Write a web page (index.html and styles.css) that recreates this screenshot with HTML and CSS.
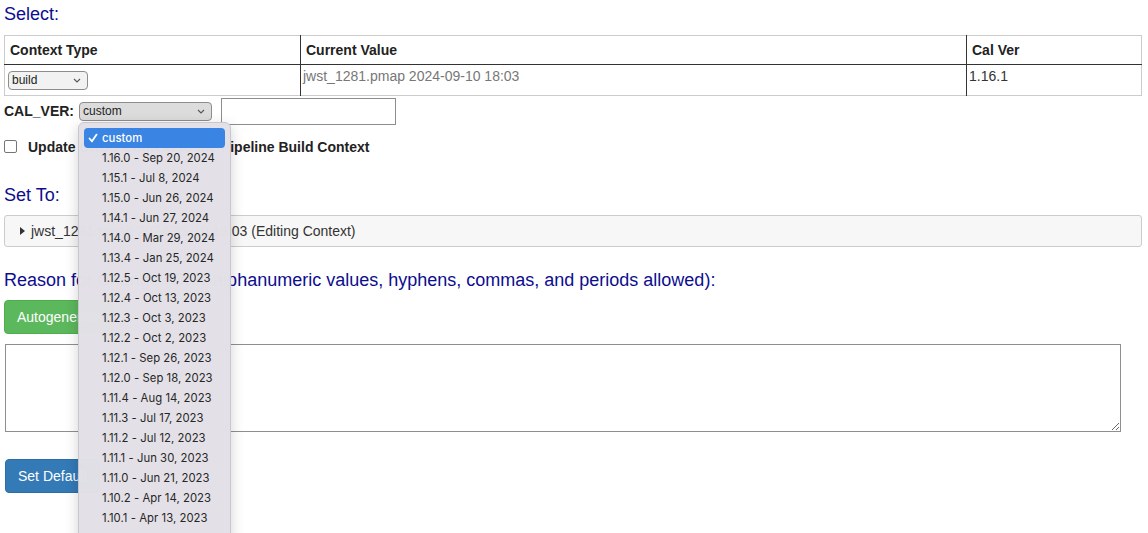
FILE: index.html
```html
<!DOCTYPE html>
<html lang="en">
<head>
<meta charset="utf-8">
<title>Context</title>
<link rel="stylesheet" href="styles.css">
</head>
<body>
<div class="page">
  <div class="heading">Select:</div>
  <table class="ctx-table">
    <thead>
      <tr><th class="c1">Context Type</th><th class="c2">Current Value</th><th class="c3">Cal Ver</th></tr>
    </thead>
    <tbody>
      <tr>
        <td class="c1 sel-cell">
          <span class="fake-select build-select">build
            <svg class="chev" width="8" height="5" viewBox="0 0 8 5"><path d="M1 1 L4 4 L7 1" fill="none" stroke="#555" stroke-width="1.1"/></svg>
          </span>
        </td>
        <td class="c2 val-cell">jwst_1281.pmap 2024-09-10 18:03</td>
        <td class="c3 ver-cell">1.16.1</td>
      </tr>
    </tbody>
  </table>

  <div class="calver-row">
    <span class="calver-label">CAL_VER:</span>
    <span class="select-wrap">
      <span class="fake-select calver-select">custom
        <svg class="chev" width="8" height="5" viewBox="0 0 8 5"><path d="M1 1 L4 4 L7 1" fill="none" stroke="#555" stroke-width="1.1"/></svg>
      </span>
      <div class="menu">
        <div class="menu-item active">
          <svg class="check" width="10" height="10" viewBox="0 0 10 10"><path d="M1.5 5.5 L4 8.3 L8.6 1.6" fill="none" stroke="#fff" stroke-width="1.8" stroke-linecap="round" stroke-linejoin="round"/></svg>custom</div>
        <div class="menu-item">1.16.0 - Sep 20, 2024</div>
        <div class="menu-item">1.15.1 - Jul 8, 2024</div>
        <div class="menu-item">1.15.0 - Jun 26, 2024</div>
        <div class="menu-item">1.14.1 - Jun 27, 2024</div>
        <div class="menu-item">1.14.0 - Mar 29, 2024</div>
        <div class="menu-item">1.13.4 - Jan 25, 2024</div>
        <div class="menu-item">1.12.5 - Oct 19, 2023</div>
        <div class="menu-item">1.12.4 - Oct 13, 2023</div>
        <div class="menu-item">1.12.3 - Oct 3, 2023</div>
        <div class="menu-item">1.12.2 - Oct 2, 2023</div>
        <div class="menu-item">1.12.1 - Sep 26, 2023</div>
        <div class="menu-item">1.12.0 - Sep 18, 2023</div>
        <div class="menu-item">1.11.4 - Aug 14, 2023</div>
        <div class="menu-item">1.11.3 - Jul 17, 2023</div>
        <div class="menu-item">1.11.2 - Jul 12, 2023</div>
        <div class="menu-item">1.11.1 - Jun 30, 2023</div>
        <div class="menu-item">1.11.0 - Jun 21, 2023</div>
        <div class="menu-item">1.10.2 - Apr 14, 2023</div>
        <div class="menu-item">1.10.1 - Apr 13, 2023</div>
      </div>
    </span>
    <input class="calver-input" type="text">
  </div>

  <label class="check-row">
    <span class="checkbox"></span>
    <span class="check-label">Update CRDS Context to the Pipeline Build Context</span>
  </label>

  <div class="heading set-to">Set To:</div>
  <div class="details-box">
    <span class="marker"></span>
    <span class="details-text">jwst_1281.pmap 2024-09-10 18:03 (Editing Context)</span>
  </div>

  <div class="heading reason">Reason for Change (Only alphanumeric values, hyphens, commas, and periods allowed):</div>
  <button class="btn btn-green">Autogenerate</button>
  <textarea class="reason-text"></textarea>
  <button class="btn btn-blue">Set Default</button>
</div>
</body>
</html>
```

FILE: styles.css
```css
html {
  overflow: hidden;
}
body {
  margin: 0;
  padding: 0;
  background: #fff;
  font-family: "Liberation Sans", Arial, sans-serif;
  font-size: 14px;
  color: #333;
}
.page {
  padding: 0 6px 0 4px;
  height: 533px;
  box-sizing: border-box;
  overflow: hidden;
}
.heading {
  font-size: 18px;
  line-height: 20px;
  color: #0d0d8f;
  padding-top: 4px;
  margin-bottom: 11px;
}
.ctx-table {
  width: 100%;
  border-collapse: collapse;
  border: 1px solid #ccc;
}
.ctx-table th {
  text-align: left;
  font-weight: bold;
  font-size: 14px;
  line-height: 19px;
  padding: 5px 5px 4px 5px;
  color: #222;
  border-bottom: 1px solid #333;
}
.ctx-table td {
  vertical-align: top;
  line-height: 20px;
  font-size: 14px;
}
.ctx-table .c1 { width: 285px; }
.ctx-table .c2 { width: 655px; border-left: 1px solid #333; }
.ctx-table .c3 { border-left: 1px solid #333; }
.sel-cell { padding: 4px 4px 5px 3px; height: 20px; }
.val-cell { padding: 1px 2px 8px 2px; color: #777; }
.ver-cell { padding: 1px 2px 8px 2px; color: #333; }

.fake-select {
  display: inline-flex;
  align-items: center;
  justify-content: space-between;
  box-sizing: border-box;
  border: 1px solid #8d8d8d;
  border-radius: 4px;
  font-family: "Liberation Sans", Arial, sans-serif;
  font-size: 12px;
  color: #222;
  padding: 0 6px 0 3px;
}
.chev { display: block; }
.build-select {
  width: 80px;
  height: 19px;
  background: #f2f2f2;
}
.calver-row {
  display: flex;
  align-items: center;
  height: 29px;
  margin-top: 1px;
}
.calver-label {
  font-weight: bold;
  color: #222;
  width: 75px;
}
.select-wrap {
  position: relative;
  margin-right: 9px;
}
.calver-select {
  width: 133px;
  height: 19px;
  background: #dcdcdc;
  margin-top: 0;
}
.calver-input {
  width: 175px;
  height: 27px;
  box-sizing: border-box;
  border: 1px solid #8d8d8d;
  border-radius: 0;
  margin: 0;
  padding: 0;
}
.menu {
  position: absolute;
  top: 20px;
  left: -1px;
  width: 153px;
  height: 430px;
  box-sizing: border-box;
  padding: 5px 5px;
  background: rgba(227, 225, 231, 0.99);
  border: 1px solid #c9c7cd;
  border-radius: 6px;
  box-shadow: 0 4px 14px rgba(0, 0, 0, 0.18);
  z-index: 10;
  overflow: hidden;
}
.menu-item {
  display: flex;
  align-items: center;
  height: 20px;
  padding-left: 18px;
  font-family: Inter, "Noto Sans", sans-serif;
  font-size: 11.3px;
  letter-spacing: 0.05px;
  color: #262626;
  white-space: nowrap;
  position: relative;
}
.menu-item.active {
  background: #3a84e3;
  color: #fff;
  border-radius: 4px;
  font-weight: 500;
}
.check {
  position: absolute;
  left: 4px;
  top: 5px;
}

.check-row {
  display: flex;
  align-items: center;
  margin-top: 12px;
  height: 18px;
}
.checkbox {
  width: 13px;
  height: 13px;
  box-sizing: border-box;
  border: 1px solid #767676;
  border-radius: 2px;
  background: #fff;
  margin-right: 11px;
}
.check-label {
  font-weight: bold;
  color: #222;
}
.set-to {
  margin-top: 25px;
  margin-bottom: 10px;
}
.details-box {
  display: flex;
  align-items: center;
  height: 32px;
  box-sizing: border-box;
  border: 1px solid #ccc;
  border-radius: 3px;
  background: #f7f7f7;
  padding-left: 15px;
}
.marker {
  width: 0;
  height: 0;
  border-top: 4px solid transparent;
  border-bottom: 4px solid transparent;
  border-left: 5px solid #333;
  margin-right: 6px;
}
.details-text { color: #333; }
.reason {
  margin-top: 19px;
  margin-bottom: 10px;
}
.btn {
  display: block;
  font-family: "Liberation Sans", Arial, sans-serif;
  font-size: 14px;
  line-height: 20px;
  color: #fff;
  border: 1px solid transparent;
  border-radius: 4px;
  padding: 6px 12px;
  cursor: pointer;
}
.btn-green {
  background: #5cb85c;
  border-color: #4cae4c;
}
.btn-blue {
  background: #337ab7;
  border-color: #2e6da4;
  margin-left: 1px;
}
.reason-text {
  display: block;
  margin: 10px 0 0 1px;
  width: 1116px;
  height: 88px;
  box-sizing: border-box;
  border: 1px solid #8e8e93;
  border-radius: 0;
  resize: both;
  margin-bottom: 27px;
}
```
